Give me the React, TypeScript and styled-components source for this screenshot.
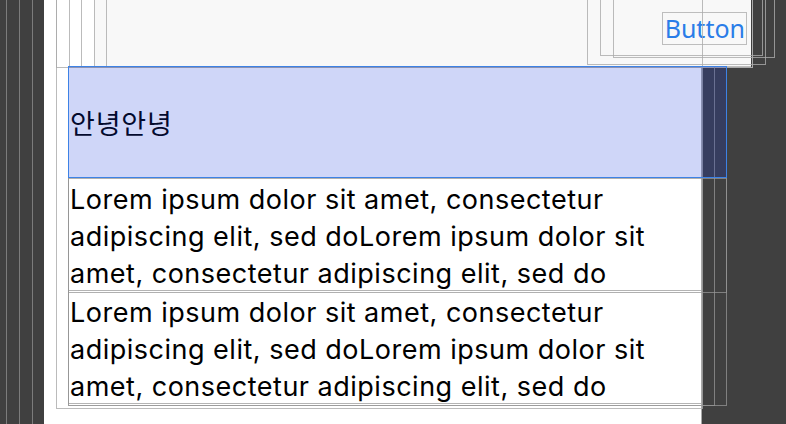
import React from "react";
import styled, { createGlobalStyle } from "styled-components";

const GlobalStyle = createGlobalStyle`
  html, body {
    margin: 0;
    padding: 0;
    background: #404040;
  }
  body {
    font-family: Inter, Roboto, "Noto Sans", sans-serif;
  }
`;

interface Frame {
  left: number;
  top: number;
  right: number;
  bottom: number;
  tone?: "light" | "dark";
}

// inspector outlines drawn over the layout
const frames: Frame[] = [
  { left: 56, top: -1, right: 752, bottom: 67, tone: "light" },
  { left: 69, top: -1, right: 752, bottom: 67, tone: "light" },
  { left: 81, top: -1, right: 752, bottom: 67, tone: "light" },
  { left: 94, top: -1, right: 752, bottom: 67, tone: "light" },
  { left: 106, top: -1, right: 752, bottom: 67, tone: "light" },
  { left: 56, top: -1, right: 702, bottom: 408, tone: "light" },
  { left: 587, top: -1, right: 765, bottom: 64, tone: "light" },
  { left: 600, top: -1, right: 762, bottom: 55, tone: "light" },
  { left: 613, top: -1, right: 774, bottom: 57, tone: "light" },
  { left: 68, top: 66, right: 714, bottom: 405, tone: "dark" },
  { left: 68, top: 66, right: 726, bottom: 405, tone: "dark" },
  { left: 68, top: 178, right: 726, bottom: 292, tone: "dark" },
];

const lorem =
  "Lorem ipsum dolor sit amet, consectetur adipiscing elit, sed doLorem ipsum dolor sit amet, consectetur adipiscing elit, sed do";

const Page = styled.div`
  position: relative;
  display: flex;
  width: 786px;
  height: 424px;
  overflow: hidden;
  background: #404040;
`;

const Gutter = styled.div`
  flex: 0 0 44px;
  background:
    linear-gradient(#7c7c7c, #7c7c7c) 6px 0 / 1px 100% no-repeat,
    linear-gradient(#7c7c7c, #7c7c7c) 19px 0 / 1px 100% no-repeat,
    linear-gradient(#7c7c7c, #7c7c7c) 32px 0 / 1px 100% no-repeat,
    #404040;
`;

const Screen = styled.div`
  flex: 0 0 658px;
  display: flex;
  flex-direction: column;
  background: #ffffff;
  border-right: 1px solid #a8a8a8;
  box-sizing: border-box;
`;

const Toolbar = styled.div`
  height: 67px;
  margin-left: 50px;
  margin-right: -50px;
  box-sizing: border-box;
  display: flex;
  justify-content: flex-end;
  align-items: flex-start;
  padding: 12px 4px 0 0;
  background: #f8f8f8;
  border-bottom: 1px solid #bdbdbd;
`;

const Button = styled.button`
  height: 33px;
  padding: 0 1px 0 2px;
  border: 1px solid #bdbdbd;
  background: transparent;
  color: #2a7de8;
  font-family: "Noto Sans", Roboto, sans-serif;
  font-size: 25px;
  line-height: 31px;
`;

const List = styled.div`
  margin-left: 24px;
  display: flex;
  flex-direction: column;
`;

const Header = styled.div`
  height: 111px;
  display: flex;
  align-items: center;
  padding-left: 2px;
  font-family: "Noto Sans CJK KR", "Noto Sans", sans-serif;
  font-size: 27px;
  letter-spacing: 0.8px;
  color: #000000;
`;

const Row = styled.div`
  height: 113px;
  box-sizing: border-box;
  padding: 3px 0 0 1px;
  border-left: 1px solid #b4b4b4;
  border-bottom: 1px solid #b4b4b4;
  font-family: Inter, Roboto, sans-serif;
  font-size: 27px;
  letter-spacing: 0.5px;
  line-height: 37px;
  color: #000000;
`;

const Highlight = styled.div`
  position: absolute;
  left: 68px;
  top: 66px;
  width: 659px;
  height: 112px;
  box-sizing: border-box;
  background: rgba(13, 50, 220, 0.2);
  border: 1px solid #3d82e6;
  pointer-events: none;
`;

const Outline = styled.div<{ $tone?: "light" | "dark" }>`
  position: absolute;
  box-sizing: border-box;
  border: 1px solid ${(p) => (p.$tone === "dark" ? "rgba(150,150,150,0.75)" : "rgba(170,170,170,0.8)")};
  pointer-events: none;
`;

export default function App() {
  return (
    <>
      <GlobalStyle />
      <Page>
        <Gutter />
        <Screen>
          <Toolbar>
            <Button>Button</Button>
          </Toolbar>
          <List>
            <Header>안녕안녕</Header>
            <Row>{lorem}</Row>
            <Row>{lorem}</Row>
          </List>
        </Screen>
        {frames.map((f, i) => (
          <Outline
            key={i}
            $tone={f.tone}
            style={{ left: f.left, top: f.top, width: f.right - f.left + 1, height: f.bottom - f.top + 1 }}
          />
        ))}
        <Highlight />
      </Page>
    </>
  );
}
